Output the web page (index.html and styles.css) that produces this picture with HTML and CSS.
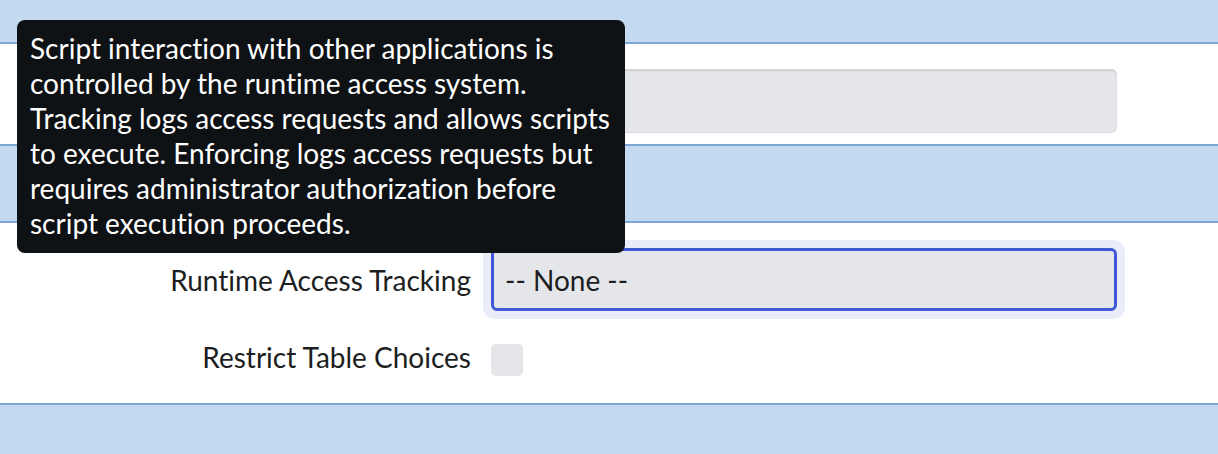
FILE: index.html
```html
<!DOCTYPE html>
<html lang="en">
<head>
<meta charset="utf-8">
<title>Script Properties</title>
<link rel="stylesheet" href="styles.css">
</head>
<body>
<div class="page">
  <div class="band band-top"></div>

  <section class="fields fields-first">
    <div class="row">
      <span class="label"></span>
      <input class="text-input" type="text" aria-label="Name" readonly>
    </div>
  </section>

  <div class="band band-mid"></div>

  <section class="fields fields-second">
    <div class="row">
      <label class="label" for="rat">Runtime Access Tracking</label>
      <div class="select-wrap">
        <div class="select" id="rat" tabindex="0">-- None --</div>
      </div>
    </div>
    <div class="row row-check">
      <label class="label" for="rtc">Restrict Table Choices</label>
      <span class="checkbox" id="rtc"></span>
    </div>
  </section>

  <div class="band band-bottom"></div>

  <div class="tooltip" role="tooltip">
    Script interaction with other applications is controlled by the runtime access system. Tracking logs access requests and allows scripts to execute. Enforcing logs access requests but requires administrator authorization before script execution proceeds.
  </div>
</div>
</body>
</html>
```

FILE: styles.css
```css
html, body {
  margin: 0;
  padding: 0;
  background: #ffffff;
}

body {
  font-family: Lato, "Open Sans", "Liberation Sans", sans-serif;
  font-variant-ligatures: none;
  color: #1f2124;
  width: 1218px;
  height: 454px;
  overflow: hidden;
}

.page {
  position: relative;
  display: flex;
  flex-direction: column;
  height: 454px;
}

/* section header bands */
.band {
  background: #c4daf0;
}

.band-top {
  height: 42px;
  border-bottom: 2px solid #7ba6d5;
}

.band-mid {
  height: 75px;
  border-top: 2px solid #7ba6d5;
  border-bottom: 2px solid #7ba6d5;
}

.band-bottom {
  flex: 1;
  border-top: 2px solid #7ba6d5;
}

/* form rows */
.fields {
  display: flex;
  flex-direction: column;
}

.fields-first {
  padding: 25px 0 11px;
}

.fields-second {
  padding: 25px 0 0;
  height: 180px;
  box-sizing: border-box;
}

.row {
  display: grid;
  grid-template-columns: 471px 626px;
  column-gap: 20px;
  align-items: center;
}

.label {
  text-align: right;
  font-size: 28px;
  line-height: 34px;
  color: #1c1e21;
}

.text-input {
  box-sizing: border-box;
  height: 64px;
  width: 626px;
  border: 0;
  border-radius: 6px;
  background: #e4e6ea;
  box-shadow: inset 0 3px 2px -1px #cfd1d4, inset 0 0 0 1px #dcdee2;
  font: inherit;
  outline: none;
}

.select-wrap {
  padding: 8px;
  margin: -8px;
  border-radius: 12px;
  background: #eaecfa;
  width: 626px;
}

.select {
  box-sizing: border-box;
  height: 63px;
  border: 3px solid #4257d6;
  border-radius: 6px;
  background: #e4e6ea;
  padding: 0 11px;
  display: flex;
  align-items: center;
  font-size: 28px;
  color: #1c1e21;
  outline: none;
}

.row-check {
  margin-top: 33px;
  align-items: start;
}

.row-check .label {
  line-height: 26px;
}

.checkbox {
  display: block;
  width: 32px;
  height: 32px;
  border-radius: 5px;
  background: #e4e6ea;
}

/* help tooltip */
.tooltip {
  position: absolute;
  left: 17px;
  top: 20px;
  width: 608px;
  height: 233px;
  box-sizing: border-box;
  padding: 11px 8px 11px 13px;
  background: #0f1215;
  border-radius: 8px;
  color: #ffffff;
  font-size: 28px;
  line-height: 35px;
}
```
